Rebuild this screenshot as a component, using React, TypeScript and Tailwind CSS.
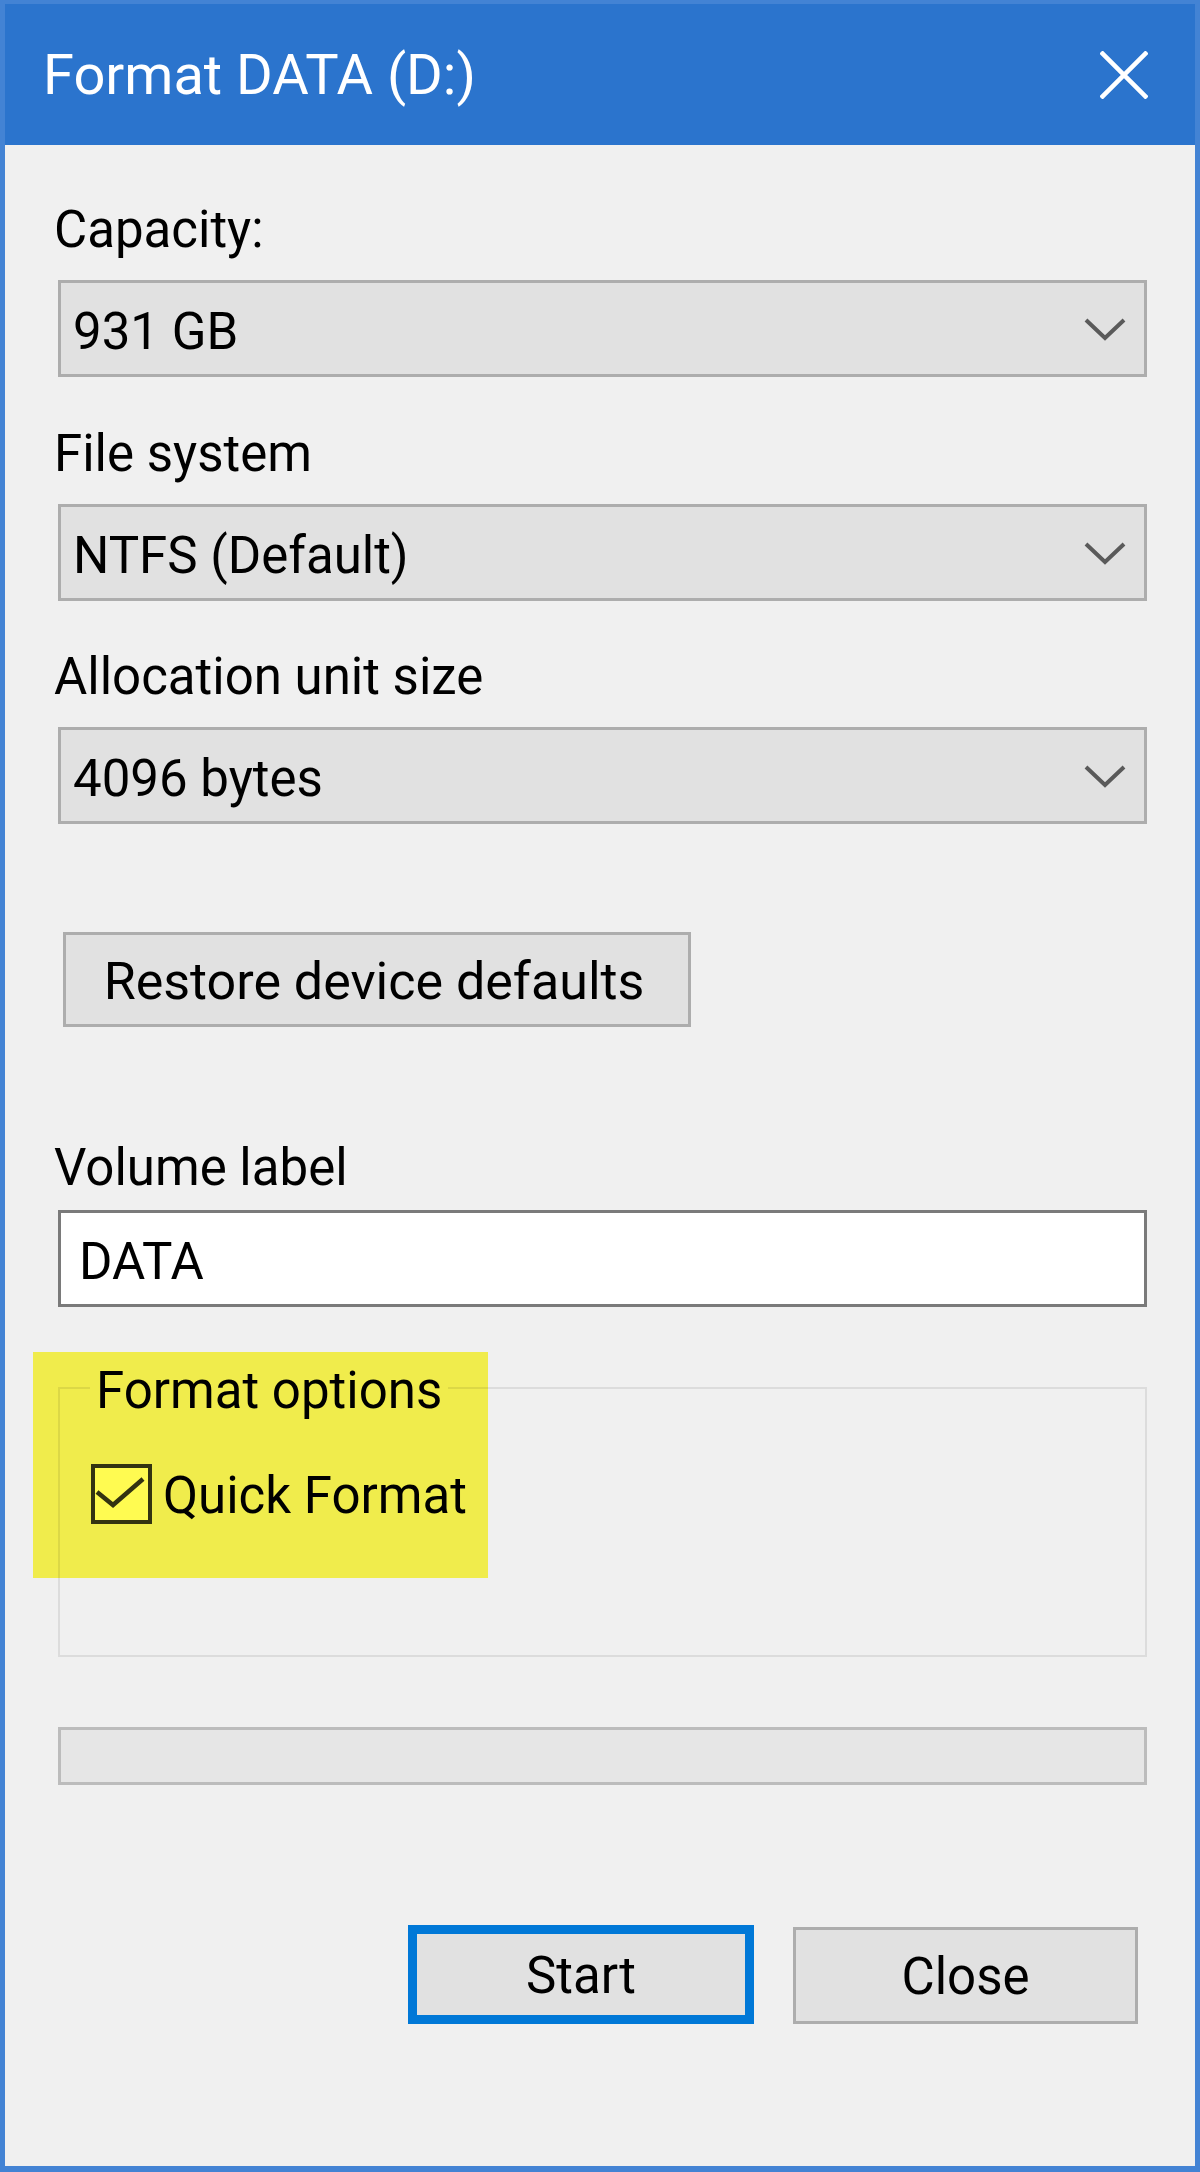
import React from "react";

function Chevron() {
  return (
    <svg width="42" height="24" viewBox="0 0 42 24" className="shrink-0">
      <path d="M2 3 L21 21 L40 3" fill="none" stroke="#5a5a5a" strokeWidth="4" />
    </svg>
  );
}

function Select({ value }: { value: string }) {
  return (
    <div className="ml-[4px] h-[97px] border-[3px] border-[#adadad] bg-[#e1e1e1] flex items-center justify-between pl-[12px] pr-[18px]">
      <span className="text-[51px] leading-[60px] pt-[6px]">{value}</span>
      <Chevron />
    </div>
  );
}

export default function App() {
  return (
    <div className="w-[1200px] h-[2172px] flex flex-col bg-[#f0f0f0] border-t-[4px] border-x-[5px] border-b-[6px] border-[#4383d4] [font-family:Roboto,sans-serif] text-black">
      <div className="h-[141px] shrink-0 bg-[#2b74cd] flex items-center justify-between pl-[38px] pr-[47px]">
        <span className="text-white text-[56px] leading-[60px]">Format DATA (D:)</span>
        <svg width="48" height="48" viewBox="0 0 48 48">
          <path d="M1 1 L47 47 M47 1 L1 47" stroke="white" strokeWidth="4.5" />
        </svg>
      </div>

      <div className="flex-1 flex flex-col pl-[49px] pr-[48px]">
        <div className="mt-[55px] h-[60px] text-[51px] leading-[60px]">Capacity:</div>
        <div className="mt-[20px]">
          <Select value="931 GB" />
        </div>

        <div className="mt-[47px] h-[60px] text-[51px] leading-[60px]">File system</div>
        <div className="mt-[20px]">
          <Select value="NTFS (Default)" />
        </div>

        <div className="mt-[46px] h-[60px] text-[51px] leading-[60px]">Allocation unit size</div>
        <div className="mt-[20px]">
          <Select value="4096 bytes" />
        </div>

        <div className="mt-[108px] ml-[9px] w-[628px] h-[95px] border-[3px] border-[#adadad] bg-[#e1e1e1] flex items-center justify-center">
          <span className="text-[52px] leading-[60px] pt-[4px] pr-[6px]">Restore device defaults</span>
        </div>

        <div className="mt-[111px] h-[60px] text-[51px] leading-[60px]">Volume label</div>
        <div className="mt-[12px] ml-[4px] h-[97px] border-[3px] border-[#7a7a7a] bg-white flex items-center pl-[18px]">
          <span className="text-[51px] leading-[60px] pt-[6px]">DATA</span>
        </div>

        <div className="relative mt-[80px] ml-[4px] h-[270px] border-2 border-[#dcdcdc]">
          <span className="absolute left-[30px] top-[-28px] px-[6px] bg-[#f0f0f0] text-[51px] leading-[60px]">
            Format options
          </span>
          <div className="mt-[73px] ml-[31px] flex items-center">
            <div className="w-[61px] h-[60px] border-[4px] border-[#333333] bg-white shrink-0">
              <svg width="53" height="52" viewBox="0 0 53 52">
                <path d="M2 24 L18 37 L48 11" fill="none" stroke="#333333" strokeWidth="4.5" />
              </svg>
            </div>
            <span className="ml-[11px] text-[51px] leading-[60px] pt-[4px]">Quick Format</span>
          </div>
          <div className="absolute left-[-27px] top-[-37px] w-[455px] h-[226px] bg-[#fffb51] mix-blend-multiply pointer-events-none"></div>
        </div>

        <div className="mt-[70px] ml-[4px] h-[58px] border-[3px] border-[#bcbcbc] bg-[#e6e6e6]"></div>

        <div className="mt-[140px] flex justify-end items-end gap-[39px] mr-[9px]">
          <div className="w-[346px] h-[99px] border-[9px] border-[#0078d7] bg-[#e1e1e1] flex items-center justify-center">
            <span className="text-[51px] leading-[60px] pt-[2px]">Start</span>
          </div>
          <div className="w-[345px] h-[97px] border-[3px] border-[#adadad] bg-[#e1e1e1] flex items-center justify-center">
            <span className="text-[51px] leading-[60px] pt-[2px]">Close</span>
          </div>
        </div>
      </div>
    </div>
  );
}
